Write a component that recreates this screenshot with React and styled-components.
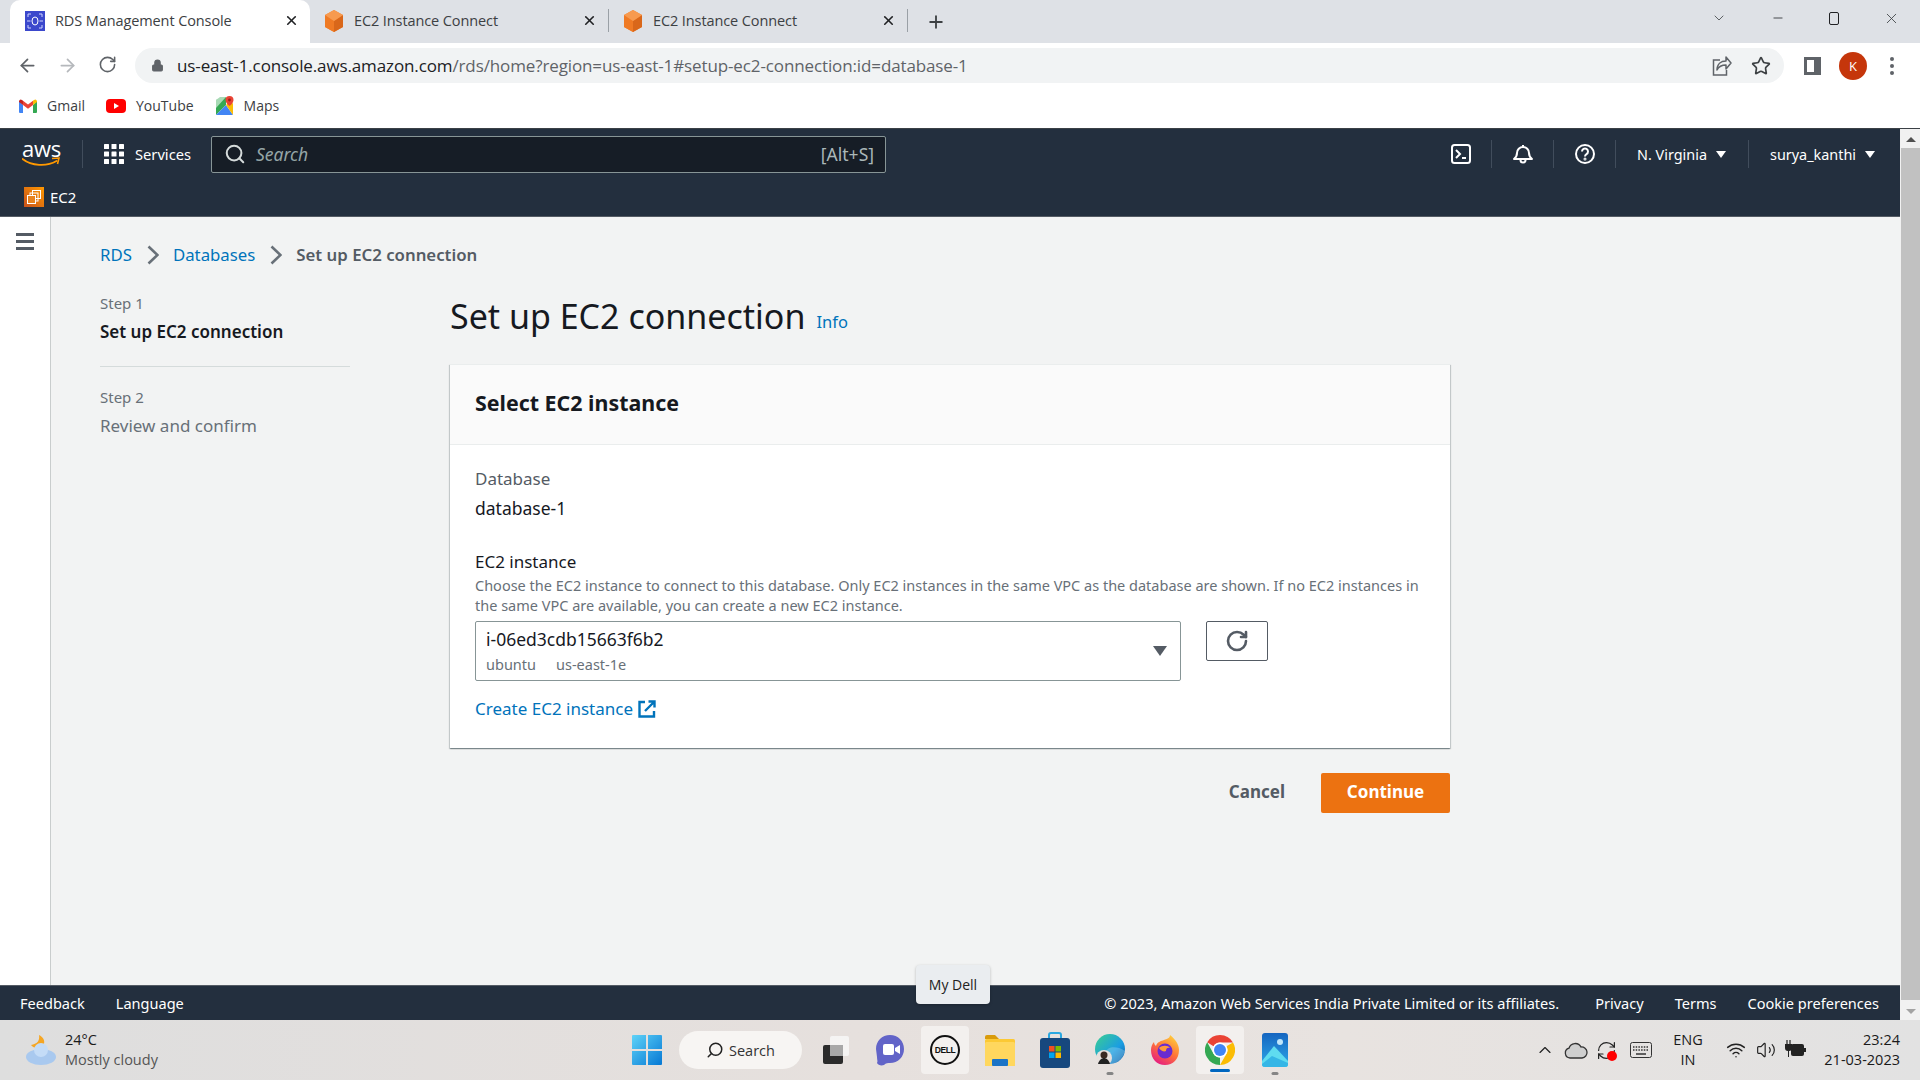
import React from 'react';
import styled, { createGlobalStyle } from 'styled-components';
import {
  ArrowLeft, ArrowRight, RotateCw, Lock, Star, X, Plus, ChevronDown, Minus,
  Search, ChevronUp, RefreshCw, Wifi, Volume2,
} from 'lucide-react';

const Global = createGlobalStyle`
  html, body { margin: 0; padding: 0; background: #fff; overflow: hidden; }
  * { box-sizing: border-box; }
`;

const AWS_FONT = `"Noto Sans", "Open Sans", sans-serif`;
const WIN_FONT = `"Open Sans", "Noto Sans", sans-serif`;

const Shell = styled.div`
  width: 1920px;
  height: 1080px;
  display: flex;
  flex-direction: column;
  overflow: hidden;
  font-family: ${AWS_FONT};
  position: relative;
`;

/* browser chrome */
const TabStrip = styled.div`
  height: 43px;
  background: #dee1e6;
  display: flex;
  align-items: stretch;
  padding-left: 10px;
  font-family: ${WIN_FONT};
  position: relative;
`;
const Tab = styled.div`
  width: ${p => (p.$active ? 300 : 299)}px;
  display: flex;
  align-items: center;
  padding: 0 ${p => (p.$active ? 11 : 12)}px 2px ${p => (p.$active ? 15 : 14)}px;
  background: ${p => (p.$active ? '#fff' : 'transparent')};
  border-radius: 10px 10px 0 0;
  background-clip: padding-box;
  color: #3c4043;
  font-size: 14.5px;
  gap: 10px;
  position: relative;
  ${p => p.$sep && `
    &::after {
      content: '';
      position: absolute;
      right: 0;
      top: 9px;
      bottom: 11px;
      width: 1px;
      background: #9aa0a6;
    }
  `}
`;
const TabTitle = styled.span`
  flex: 1;
  white-space: nowrap;
  letter-spacing: -0.1px;
`;
const TabNew = styled.div`
  width: 55px;
  display: flex;
  align-items: center;
  justify-content: center;
  color: #3c4043;
`;
const WindowButtons = styled.div`
  margin-left: auto;
  display: flex;
  align-items: center;
  color: #3c4043;
  padding-right: 20px;
  gap: 44px;
  height: 36px;
`;
const MaxIcon = styled.span`
  display: block;
  width: 10px;
  height: 13px;
  border: 1.5px solid #202124;
  border-radius: 2px;
`;

const Toolbar = styled.div`
  height: 45px;
  background: #fff;
  display: flex;
  align-items: center;
  color: #5f6368;
`;
const NavButton = styled.div`
  width: 40px;
  display: flex;
  justify-content: center;
  color: ${p => (p.$off ? '#b5b8bc' : '#5f6368')};
`;
const NavGroup = styled.div`
  display: flex;
  padding-left: 7px;
  width: 135px;
`;
const Omnibox = styled.div`
  width: 1649px;
  height: 35px;
  border-radius: 18px;
  background: #f1f3f4;
  display: flex;
  align-items: center;
  padding: 0 13px 0 16px;
  font-family: ${WIN_FONT};
  font-size: 17px;
  color: #5f6368;
  letter-spacing: -0.12px;
`;
const Url = styled.span`
  margin-left: 13px;
  flex: 1;
  white-space: nowrap;
  b { font-weight: 400; color: #202124; }
`;
const OmniIcons = styled.div`
  display: flex;
  gap: 19px;
  align-items: center;
`;
const PanelIcon = styled.span`
  display: block;
  width: 17px;
  height: 18px;
  margin-left: 20px;
  border: 3px solid #5f6368;
  border-right-width: 7px;
`;
const Avatar = styled.span`
  width: 28px;
  height: 28px;
  border-radius: 50%;
  margin-left: 18px;
  background: #c5360b;
  color: #fff;
  display: flex;
  align-items: center;
  justify-content: center;
  font-family: ${WIN_FONT};
  font-size: 13px;
`;
const Dots = styled.span`
  margin-left: 23px;
  width: 4px;
  display: flex;
  flex-direction: column;
  gap: 3px;
  i { display: block; width: 4px; height: 4px; border-radius: 50%; background: #5f6368; }
`;

const Bookmarks = styled.div`
  height: 41px;
  background: #fff;
  display: flex;
  align-items: center;
  padding: 0 0 5px 19px;
  font-family: ${WIN_FONT};
  font-size: 14px;
  color: #3c4043;
  border-bottom: 1px solid #3b4046;
`;
const Bookmark = styled.div`
  display: flex;
  align-items: center;
  gap: 10px;
  margin-right: ${p => p.$gap}px;
`;

/* console */
const ConsoleArea = styled.div`
  flex: 1;
  display: flex;
  min-height: 0;
`;
const Console = styled.div`
  width: 1900px;
  display: flex;
  flex-direction: column;
`;
const Scrollbar = styled.div`
  width: 20px;
  background: #f1f1f1;
  display: flex;
  flex-direction: column;
  align-items: center;
  padding: 8px 0 0 1px;
`;
const ScrollArrow = styled.span`
  width: 0;
  height: 0;
  border-left: 5px solid transparent;
  border-right: 5px solid transparent;
  ${p => (p.$down ? 'border-top: 5px solid #a3a3a3;' : 'border-bottom: 5px solid #505050;')}
`;
const ScrollThumb = styled.div`
  width: 100%;
  flex: 1;
  background: #c1c1c1;
  margin: 6px 0 9px;
`;
const TopBar = styled.div`
  height: 52px;
  background: #232f3e;
  display: flex;
  align-items: center;
  padding-bottom: 2px;
  color: #fff;
  font-size: 15px;
`;
const AwsLogo = styled.div`
  width: 60px;
  margin-left: 22px;
  position: relative;
  height: 36px;
  span {
    position: absolute;
    left: 0;
    top: -3px;
    font-size: 22px;
    font-family: "Open Sans", sans-serif;
    letter-spacing: -0.2px;
    color: #fff;
  }
  svg { position: absolute; left: 0; top: 21px; }
`;
const BarDivider = styled.span`
  width: 1px;
  height: 28px;
  background: #414d5c;
  margin: ${p => p.$m || '0'};
`;
const ServicesBtn = styled.div`
  display: flex;
  align-items: center;
  gap: 11px;
  font-size: 14.7px;
  width: 107px;
  margin-left: 21px;
`;
const SearchBox = styled.div`
  width: 675px;
  height: 37px;
  background: #161d26;
  border: 1px solid #879596;
  border-radius: 2px;
  display: flex;
  align-items: center;
  padding: 0 11px 0 12px;
  gap: 10px;
  color: #d5dbdb;
`;
const SearchHint = styled.span`
  font-style: italic;
  font-size: 17.5px;
  color: #95a5a6;
  flex: 1;
`;
const Shortcut = styled.span`
  font-size: 17.5px;
  color: #aab7b8;
`;
const TopRight = styled.div`
  margin-left: auto;
  display: flex;
  align-items: center;
  height: 100%;
  padding-right: 25px;
`;
const MenuText = styled.span`
  display: flex;
  align-items: center;
  gap: 9px;
  white-space: nowrap;
  font-size: 14.4px;
  i {
    width: 0; height: 0;
    border-left: 5px solid transparent;
    border-right: 5px solid transparent;
    border-top: 7px solid #fff;
  }
`;
const ServiceBar = styled.div`
  height: 36px;
  background: #232f3e;
  border-bottom: 1px solid #545b64;
  display: flex;
  align-items: center;
  padding: 0 0 3px 24px;
  gap: 6px;
  color: #fff;
  font-size: 15px;
`;
const Ec2Badge = styled.span`
  width: 20px;
  height: 20px;
  background: linear-gradient(45deg, #c8511b, #ff9900);
  display: flex;
  align-items: center;
  justify-content: center;
`;
const Body = styled.div`
  flex: 1;
  display: flex;
  min-height: 0;
  background: #f2f3f3;
`;
const SideRail = styled.div`
  width: 51px;
  background: #fff;
  border-right: 1px solid #c9cdcd;
  padding: 16px 0 0 16px;
`;
const Burger = styled.div`
  width: 18px;
  display: flex;
  flex-direction: column;
  gap: 4px;
  i { display: block; height: 3px; background: #545b64; }
`;
const Content = styled.div`
  flex: 1;
  padding: 24px 0 0 49px;
`;
const Crumbs = styled.div`
  display: flex;
  align-items: center;
  height: 26px;
  font-size: 16.8px;
  color: #0073bb;
`;
const CrumbChevron = styled.svg`
  width: 12px;
  height: 20px;
  margin: 2px 14px 0 15px;
`;
const CrumbNow = styled.span`
  color: #545b64;
  font-weight: 600;
`;
const Wizard = styled.div`
  display: flex;
  gap: 100px;
`;
const Steps = styled.div`
  width: 250px;
  padding-top: 25px;
`;
const StepLabel = styled.div`
  font-size: 15px;
  line-height: 22px;
  color: #687078;
`;
const StepName = styled.div`
  font-size: 17px;
  line-height: 26px;
  margin-top: 5px;
  font-weight: ${p => (p.$current ? 600 : 400)};
  color: ${p => (p.$current ? '#16191f' : '#687078')};
`;
const StepRule = styled.div`
  height: 1px;
  background: #d5dbdb;
  margin: 21px 0 19px;
`;
const Main = styled.div`
  width: 1000px;
  padding-top: 27px;
`;
const TitleRow = styled.div`
  display: flex;
  align-items: flex-start;
  gap: 11px;
  height: 44px;
  margin-bottom: 26px;
`;
const Title = styled.h1`
  margin: 0;
  font-size: 34px;
  line-height: 44px;
  font-weight: 400;
  color: #16191f;
`;
const InfoLink = styled.a`
  font-size: 16.5px;
  line-height: 24px;
  margin-top: 16px;
  color: #0073bb;
`;
const Card = styled.section`
  background: #fff;
  border-top: 1px solid #eaeded;
  box-shadow: 0 1px 1px 0 rgba(0, 28, 36, 0.3), 1px 1px 1px 0 rgba(0, 28, 36, 0.15), -1px 1px 1px 0 rgba(0, 28, 36, 0.15);
  height: 384px;
`;
const CardHead = styled.div`
  height: 80px;
  background: #fafafa;
  border-bottom: 1px solid #eaeded;
  padding: 0 25px 5px;
  display: flex;
  align-items: center;
`;
const CardTitle = styled.h2`
  margin: 0;
  font-size: 21.4px;
  font-weight: 700;
  color: #16191f;
`;
const CardBody = styled.div`
  padding: 22px 25px 0;
`;
const FieldKey = styled.div`
  font-size: 17px;
  line-height: 24px;
  color: #545b64;
`;
const FieldValue = styled.div`
  font-size: 17.5px;
  line-height: 24px;
  margin-top: 5px;
  color: #16191f;
`;
const FieldLabel = styled.div`
  font-size: 17px;
  line-height: 24px;
  margin-top: 30px;
  color: #16191f;
`;
const FieldHelp = styled.div`
  font-size: 14.5px;
  line-height: 20px;
  margin-top: 1px;
  color: #687078;
  white-space: nowrap;
`;
const SelectRow = styled.div`
  display: flex;
  align-items: flex-start;
  gap: 25px;
  margin-top: 6px;
`;
const SelectBox = styled.div`
  width: 706px;
  height: 60px;
  border: 1px solid #879596;
  border-radius: 2px;
  padding: 4px 10px 0;
  position: relative;
`;
const SelectMain = styled.div`
  font-size: 17.5px;
  line-height: 26px;
  color: #16191f;
`;
const SelectMeta = styled.div`
  display: flex;
  gap: 20px;
  font-size: 14.5px;
  line-height: 24px;
  color: #687078;
`;
const SelectCaret = styled.span`
  position: absolute;
  right: 13px;
  top: 24px;
  width: 0;
  height: 0;
  border-left: 7px solid transparent;
  border-right: 7px solid transparent;
  border-top: 10px solid #545b64;
`;
const RefreshBtn = styled.button`
  width: 62px;
  height: 40px;
  background: #fff;
  border: 1px solid #545b64;
  border-radius: 2px;
  color: #545b64;
  display: flex;
  align-items: center;
  justify-content: center;
  padding: 0;
`;
const CreateLink = styled.a`
  display: flex;
  align-items: center;
  gap: 5px;
  margin-top: 16px;
  line-height: 24px;
  font-size: 17px;
  color: #0073bb;
`;
const Actions = styled.div`
  display: flex;
  justify-content: flex-end;
  align-items: center;
  margin-top: 25px;
  gap: 36px;
`;
const CancelBtn = styled.button`
  border: 0;
  background: none;
  padding: 0 0 3px;
  font-family: inherit;
  font-size: 17px;
  font-weight: 700;
  color: #545b64;
`;
const ContinueBtn = styled.button`
  width: 129px;
  height: 40px;
  border: 0;
  border-radius: 2px;
  background: #ec7211;
  color: #fff;
  font-family: inherit;
  font-size: 17px;
  font-weight: 700;
  padding: 0 0 3px;
`;
const Footer = styled.footer`
  height: 35px;
  background: #232f3e;
  border-top: 1px solid #545b64;
  display: flex;
  align-items: center;
  gap: 31px;
  padding: 0 21px 0 20px;
  color: #fff;
  font-size: 14.55px;
`;
const Copyright = styled.span`
  margin-left: auto;
  margin-right: 5px;
`;
const Tooltip = styled.div`
  position: absolute;
  left: 916px;
  top: 965px;
  width: 74px;
  height: 39px;
  background: #eaedf0;
  border-radius: 4px;
  box-shadow: 0 1px 3px rgba(0, 0, 0, 0.25);
  display: flex;
  align-items: center;
  justify-content: center;
  font-family: ${WIN_FONT};
  font-size: 14px;
  color: #222;
`;

/* taskbar */
const Taskbar = styled.div`
  height: 60px;
  background: linear-gradient(90deg, #dedede, #e6e0dd 45%, #e8e3e0 70%, #e2e2e2);
  display: flex;
  align-items: center;
  font-family: ${WIN_FONT};
  color: #1a1a1a;
`;
const Weather = styled.div`
  width: 623px;
  padding-left: 26px;
  display: flex;
  align-items: center;
  gap: 9px;
`;
const WeatherText = styled.div`
  font-size: 14.5px;
  line-height: 20px;
  span { display: block; color: #555; }
`;
const Slot = styled.div`
  width: 48px;
  height: 48px;
  border-radius: 4px;
  display: flex;
  align-items: center;
  justify-content: center;
  position: relative;
  background: ${p => (p.$open ? '#f3f0ee' : 'transparent')};
`;
const SlotRow = styled.div`
  display: flex;
  gap: 7px;
  margin-left: 9px;
`;
const RunDot = styled.span`
  position: absolute;
  bottom: ${p => (p.$wide ? '2px' : '-1px')};
  left: 50%;
  transform: translateX(-50%);
  width: ${p => (p.$wide ? 20 : 7)}px;
  height: 3px;
  border-radius: 2px;
  background: ${p => (p.$wide ? '#0067c0' : '#858585')};
`;
const SearchPill = styled.div`
  width: 123px;
  height: 38px;
  margin-left: 8px;
  border-radius: 19px;
  background: #f7f5f3;
  display: flex;
  align-items: center;
  padding-left: 27px;
  gap: 5px;
  font-size: 14.5px;
  color: #333;
`;
const Tray = styled.div`
  margin-left: auto;
  display: flex;
  align-items: center;
  padding-right: 20px;
`;
const TrayIcon = styled.span`
  width: ${p => p.$w || 24}px;
  margin-left: ${p => p.$ml || 6}px;
  display: flex;
  justify-content: center;
  color: #222;
  position: relative;
`;
const RedDot = styled.i`
  position: absolute;
  right: 1px;
  bottom: 0;
  width: 10px;
  height: 10px;
  border-radius: 50%;
  background: #f00;
`;
const Lang = styled.div`
  width: 40px;
  margin-left: 11px;
  text-align: center;
  font-size: 14.5px;
  line-height: 20px;
`;
const Clock = styled.div`
  width: 93px;
  text-align: right;
  font-size: 14.5px;
  line-height: 20px;
`;

/* drawn logos */
const CubeIcon = () => (
  <svg width="20" height="22" viewBox="0 0 20 22">
    <path d="M10 0 19 5v12l-9 5-9-5V5z" fill="#f58536" />
    <path d="M10 11v11l-9-5V5z" fill="#ef7a24" />
    <path d="M10 11 19 5v12l-9 5z" fill="#d9671a" />
    <path d="M10 0 19 5l-9 6-9-6z" fill="#f79a4f" />
  </svg>
);
const RdsIcon = () => (
  <svg width="20" height="20" viewBox="0 0 20 20">
    <rect width="20" height="20" fill="#3b48cc" />
    <ellipse cx="10" cy="10" rx="3" ry="4" fill="none" stroke="#fff" />
    <path d="M3 6V3h3M14 3h3v3M17 14v3h-3M6 17H3v-3M5.5 10H2M14.500 10H18" stroke="#cfd3ff" fill="none" />
  </svg>
);
const GmailIcon = () => (
  <svg width="18" height="14" viewBox="0 0 18 14">
    <path d="M0 2v11a1 1 0 0 0 1 1h3V6z" fill="#4285f4" />
    <path d="M18 2v11a1 1 0 0 1-1 1h-3V6z" fill="#34a853" />
    <path d="M14 6 18 3V2a2 2 0 0 0-3-1l-1 .7z" fill="#fbbc04" />
    <path d="M4 6 9 9.700 14 6V1.700L9 5.400 4 1.700z" fill="#ea4335" />
    <path d="M0 2v1l4 3V1.700L3 1a2 2 0 0 0-3 1z" fill="#c5221f" />
  </svg>
);
const YoutubeIcon = () => (
  <svg width="20" height="14" viewBox="0 0 20 14">
    <rect width="20" height="14" rx="4" fill="#f00" />
    <path d="m8 4 5 3-5 3z" fill="#fff" />
  </svg>
);
const MapsIcon = () => (
  <svg width="19" height="20" viewBox="0 0 19 20">
    <path d="M1 4 11 1v8L1 19z" fill="#34a853" />
    <path d="M1 19 11 9l7 10z" fill="#4285f4" />
    <path d="M1 4 5 1h6L1 12z" fill="#a8dab5" />
    <path d="M11 9 16 4l2 4v11z" fill="#fbbc04" />
    <path d="M14.500 0a4 4 0 0 0-4 4c0 3 4 6 4 6s4-3 4-6a4 4 0 0 0-4-4z" fill="#ea4335" />
    <circle cx="14.500" cy="4" r="1.400" fill="#9d1f17" />
  </svg>
);
const ShareIcon = () => (
  <svg width="20" height="22" viewBox="0 0 20 22" fill="none" stroke="#5f6368" strokeWidth="1.500">
    <path d="M8 5H1.500v15h13v-5" />
    <path d="M5 15c0-6 4-9 9-9V2l5 6-5 6v-4c-4 0-7 1-9 5z" strokeLinejoin="round" />
  </svg>
);
const SwooshIcon = () => (
  <svg width="38" height="12" viewBox="0 0 38 12">
    <path d="M0.500 2c9 7 24 8 34 2" fill="none" stroke="#ff9900" strokeWidth="1.800" strokeLinecap="round" />
    <path d="M30 1.500 37 1l-1.500 6" fill="none" stroke="#ff9900" strokeWidth="1.600" />
  </svg>
);
const GridIcon = () => (
  <svg width="20" height="20" viewBox="0 0 20 20" fill="#fff">
    {[0, 7.5, 15].map(y => [0, 7.5, 15].map(x => <rect key={`${x}-${y}`} x={x} y={y} width="5" height="5" rx="0.5" />))}
  </svg>
);
const Ec2Glyph = () => (
  <svg width="14" height="14" viewBox="0 0 14 14" fill="none" stroke="#fff" strokeWidth="1">
    <rect x="5.500" y="0.500" width="8" height="8" />
    <rect x="3" y="3" width="8" height="8" />
    <rect x="0.500" y="5.500" width="8" height="8" fill="#e8821e" />
  </svg>
);
const TerminalIcon = () => (
  <svg width="20" height="20" viewBox="0 0 20 20" fill="none" stroke="#fff" strokeWidth="2">
    <rect x="1" y="1" width="18" height="18" rx="2.500" />
    <path d="m5 6 4 4-4 4M11 14h4" />
  </svg>
);
const BellIcon = () => (
  <svg width="20" height="20" viewBox="0 0 20 20" fill="none" stroke="#fff" strokeWidth="2">
    <path d="M1 15c2-1.500 3-3 3-6a6 6 0 0 1 12 0c0 3 1 4.500 3 6z" strokeLinejoin="round" />
    <path d="M7.500 16a2.500 2.500 0 0 0 5 0M10 3V1" />
  </svg>
);
const HelpIcon = () => (
  <svg width="20" height="20" viewBox="0 0 20 20" fill="none" stroke="#fff" strokeWidth="2">
    <circle cx="10" cy="10" r="9" />
    <path d="M7 7.500a3 3 0 1 1 4.500 2.600c-1 .6-1.500 1.200-1.500 2.400" />
    <circle cx="10" cy="15" r="0.500" />
  </svg>
);
const ExternalIcon = () => (
  <svg width="18" height="18" viewBox="0 0 18 18" fill="none" stroke="#0073bb" strokeWidth="2.400">
    <path d="M7 2H1.500v14.500H16V11" />
    <path d="M7 11 16 2M10.500 1.500h6v6" />
  </svg>
);
const WeatherIcon = () => (
  <svg width="30" height="30" viewBox="0 0 30 30">
    <path d="M13 0c1 6-2 9-8 10 3 4 10 4 13-1 1-4-1-7-5-9z" fill="#f5a623" />
    <ellipse cx="15" cy="22" rx="15" ry="8" fill="#a9c9ef" />
    <circle cx="15" cy="15" r="7" fill="#c4dcf7" />
  </svg>
);
const WindowsIcon = () => (
  <svg width="30" height="30" viewBox="0 0 30 30">
    <defs>
      <linearGradient id="winG" x1="0" y1="0" x2="1" y2="1">
        <stop offset="0" stopColor="#5fd3f8" />
        <stop offset="1" stopColor="#0678d4" />
      </linearGradient>
    </defs>
    <path d="M0 1a1 1 0 0 1 1-1h13v14H0zM16 0h13a1 1 0 0 1 1 1v13H16zM0 16h14v14H1a1 1 0 0 1-1-1zM16 16h14v13a1 1 0 0 1-1 1H16z" fill="url(#winG)" />
  </svg>
);
const TaskViewIcon = () => (
  <svg width="30" height="30" viewBox="0 0 30 30">
    <rect x="3" y="10" width="20" height="19" rx="2" fill="#2b2b2b" />
    <rect x="10" y="1" width="19" height="20" rx="2" fill="#f7f7f7" fillOpacity="0.85" />
    <rect x="10" y="10" width="13" height="11" fill="#a8a8a8" />
  </svg>
);
const TeamsIcon = () => (
  <svg width="30" height="32" viewBox="0 0 30 32">
    <path d="M15 1c8 0 14 6 14 14s-6 14-14 14c-2 0-4 0-6 2-3 1-6 0-7-2 1-2 0-3 0-6L1 15C1 7 7 1 15 1z" fill="#6264c8" />
    <rect x="8" y="10" width="11" height="11" rx="2" fill="#fff" />
    <path d="m20 14 5-3v9l-5-3z" fill="#fff" />
  </svg>
);
const DellRing = styled.span`
  width: 30px;
  height: 30px;
  border-radius: 50%;
  border: 2.500px solid #111;
  display: flex;
  align-items: center;
  justify-content: center;
  font-family: "Liberation Sans", sans-serif;
  font-weight: 700;
  font-size: 8.500px;
  letter-spacing: -0.4px;
  color: #111;
`;
const FolderIcon = () => (
  <svg width="30" height="32" viewBox="0 0 30 32">
    <path d="M0 3a2 2 0 0 1 2-2h8l4 4H0z" fill="#d99b0b" />
    <rect y="5" width="30" height="27" rx="1.500" fill="#fcc934" />
    <rect y="8" width="30" height="24" rx="1.500" fill="#ffd75e" />
    <rect x="7" y="25" width="16" height="7" rx="1" fill="#1a73c6" />
  </svg>
);
const StoreIcon = () => (
  <svg width="30" height="36" viewBox="0 0 30 36">
    <path d="M9 6V3a2 2 0 0 1 2-2h8a2 2 0 0 1 2 2v3" fill="none" stroke="#2aa7e0" strokeWidth="2" />
    <rect y="6" width="30" height="30" rx="3" fill="#17487e" />
    <rect x="9" y="14" width="5.500" height="5.500" fill="#f25022" />
    <rect x="15.500" y="14" width="5.500" height="5.500" fill="#7fba00" />
    <rect x="9" y="20.500" width="5.500" height="5.500" fill="#00a4ef" />
    <rect x="15.500" y="20.500" width="5.500" height="5.500" fill="#ffb900" />
  </svg>
);
const EdgeIcon = () => (
  <svg width="30" height="32" viewBox="0 0 30 32">
    <defs>
      <linearGradient id="edgeG" x1="0" y1="0" x2="1" y2="1">
        <stop offset="0" stopColor="#3bd08f" />
        <stop offset="0.6" stopColor="#1b9de2" />
        <stop offset="1" stopColor="#0c59a4" />
      </linearGradient>
    </defs>
    <circle cx="15" cy="15" r="15" fill="url(#edgeG)" />
    <path d="M11 18c1-5 10-7 19-1-2 7-8 13-15 13-3 0-1-8-4-12z" fill="#dff5f7" fillOpacity="0.25" />
    <circle cx="9" cy="24" r="8" fill="#e6e0dd" />
    <circle cx="9" cy="21" r="3.500" fill="#3a2a22" />
    <path d="M3 30c1-4 4-6 6-6s5 2 6 6z" fill="#222" />
  </svg>
);
const FirefoxIcon = () => (
  <svg width="30" height="32" viewBox="0 0 30 32">
    <defs>
      <linearGradient id="foxG" x1="0.800" y1="0" x2="0.200" y2="1">
        <stop offset="0" stopColor="#ffd13a" />
        <stop offset="0.5" stopColor="#ff7139" />
        <stop offset="1" stopColor="#e31587" />
      </linearGradient>
    </defs>
    <path d="M20 1c5 4 9 9 9 15 0 9-6 15-14 15S1 25 1 16c0-3 1-6 3-8 0 2 1 3 2 4 1-4 5-5 8-6 3-1 6-2 6-5z" fill="url(#foxG)" />
    <circle cx="15" cy="17" r="7.500" fill="#6a2bd0" />
    <path d="M9 14c3-3 9-3 11 0-3-1-4 1-4 3-2 1-5 0-7-3z" fill="#ff9a3c" />
  </svg>
);
const ChromeIcon = () => (
  <svg width="30" height="30" viewBox="0 0 30 30">
    <path d="M15 0a15 15 0 0 1 13 7.500H15a7.500 7.500 0 0 0-6.500 3.750L2.200 7.200A15 15 0 0 1 15 0z" fill="#ea4335" />
    <path d="M28 7.500A15 15 0 0 1 15 30l6.500-11.250a7.500 7.500 0 0 0 0-7.500z" fill="#fbbc04" />
    <path d="M15 30A15 15 0 0 1 2.200 7.200l6.300 11.550A7.500 7.500 0 0 0 15 22.500z" fill="#34a853" />
    <circle cx="15" cy="15" r="7.500" fill="#fff" />
    <circle cx="15" cy="15" r="6" fill="#4285f4" />
  </svg>
);
const PhotosIcon = () => (
  <svg width="26" height="34" viewBox="0 0 26 34">
    <defs>
      <linearGradient id="phG" x1="0" y1="0" x2="0" y2="1">
        <stop offset="0" stopColor="#1565c0" />
        <stop offset="1" stopColor="#2ea8e8" />
      </linearGradient>
    </defs>
    <rect width="26" height="34" rx="3" fill="url(#phG)" />
    <circle cx="18" cy="9" r="3" fill="#bfe6fb" />
    <path d="M0 28 12 13l14 15v3a3 3 0 0 1-3 3H3a3 3 0 0 1-3-3z" fill="#5fdcf0" />
    <path d="M0 31 10 23l16 7v1a3 3 0 0 1-3 3H3a3 3 0 0 1-3-3z" fill="#35b6e6" />
  </svg>
);
const OneDriveIcon = () => (
  <svg width="24" height="18" viewBox="0 0 24 18" fill="#cfcfcf" stroke="#333" strokeWidth="1.300">
    <path d="M6 17a5 5 0 0 1-1-9.800A6.500 6.500 0 0 1 17 6a5.500 5.500 0 0 1 1 11z" />
  </svg>
);
const KeyboardIcon = () => (
  <svg width="22" height="16" viewBox="0 0 22 16" fill="none" stroke="#333">
    <rect x="0.500" y="0.500" width="21" height="15" rx="2" />
    <path d="M3 5h16M3 8h16" strokeDasharray="1.500 1.200" strokeWidth="1.500" />
    <path d="M6 12h10" strokeWidth="1.500" />
  </svg>
);
const BatteryIcon = () => (
  <svg width="22" height="20" viewBox="0 0 22 20" fill="#222">
    <path d="M3 0v4M6 0v4" stroke="#222" strokeWidth="1.200" />
    <path d="M1 4h7v4a3 3 0 0 1-3 3H4a3 3 0 0 1-3-3zM4 11h1v6H4z" />
    <rect x="7" y="4" width="13" height="12" rx="2" />
    <rect x="20" y="8" width="2" height="4" />
  </svg>
);
const Chevron = () => (
  <CrumbChevron viewBox="0 0 12 20" fill="none" stroke="#687078" strokeWidth="2.600">
    <path d="m1.500 1.500 9 8.500-9 8.500" />
  </CrumbChevron>
);

const taskApps = [
  { key: 'task', icon: <TaskViewIcon /> },
  { key: 'teams', icon: <TeamsIcon /> },
  { key: 'dell', icon: <DellRing>DELL</DellRing>, open: true },
  { key: 'files', icon: <FolderIcon /> },
  { key: 'store', icon: <StoreIcon /> },
  { key: 'edge', icon: <EdgeIcon />, dot: true },
  { key: 'fox', icon: <FirefoxIcon /> },
  { key: 'chrome', icon: <ChromeIcon />, open: true, wide: true },
  { key: 'photos', icon: <PhotosIcon />, dot: true },
];

export default function App() {
  return (
    <Shell>
      <Global />
      <TabStrip>
        <Tab $active>
          <RdsIcon />
          <TabTitle>RDS Management Console</TabTitle>
          <X size={15} strokeWidth={2.6} color="#202124" />
        </Tab>
        <Tab $sep>
          <CubeIcon />
          <TabTitle>EC2 Instance Connect</TabTitle>
          <X size={15} strokeWidth={2.6} color="#202124" />
        </Tab>
        <Tab $sep>
          <CubeIcon />
          <TabTitle>EC2 Instance Connect</TabTitle>
          <X size={15} strokeWidth={2.6} color="#202124" />
        </Tab>
        <TabNew><Plus size={20} strokeWidth={2.2} /></TabNew>
        <WindowButtons>
          <ChevronDown size={16} strokeWidth={1.2} />
          <Minus size={14} strokeWidth={1.6} />
          <MaxIcon />
          <X size={17} strokeWidth={1.2} />
        </WindowButtons>
      </TabStrip>

      <Toolbar>
        <NavGroup>
          <NavButton><ArrowLeft size={21} /></NavButton>
          <NavButton $off><ArrowRight size={21} /></NavButton>
          <NavButton><RotateCw size={19} /></NavButton>
        </NavGroup>
        <Omnibox>
          <Lock size={13} fill="#5f6368" />
          <Url><b>us-east-1.console.aws.amazon.com</b>/rds/home?region=us-east-1#setup-ec2-connection:id=database-1</Url>
          <OmniIcons>
            <ShareIcon />
            <Star size={20} color="#3c4043" />
          </OmniIcons>
        </Omnibox>
        <PanelIcon />
        <Avatar>K</Avatar>
        <Dots><i /><i /><i /></Dots>
      </Toolbar>

      <Bookmarks>
        <Bookmark $gap={21}><GmailIcon />Gmail</Bookmark>
        <Bookmark $gap={21}><YoutubeIcon />YouTube</Bookmark>
        <Bookmark $gap={0}><MapsIcon />Maps</Bookmark>
      </Bookmarks>

      <ConsoleArea>
        <Console>
          <TopBar>
            <AwsLogo>
              <span>aws</span>
              <SwooshIcon />
            </AwsLogo>
            <BarDivider />
            <ServicesBtn><GridIcon />Services</ServicesBtn>
            <SearchBox>
              <Search size={22} strokeWidth={2.2} />
              <SearchHint>Search</SearchHint>
              <Shortcut>[Alt+S]</Shortcut>
            </SearchBox>
            <TopRight>
              <TerminalIcon />
              <BarDivider $m="0 21px 0 20px" />
              <BellIcon />
              <BarDivider $m="0 21px 0 20px" />
              <HelpIcon />
              <BarDivider $m="0 21px 0 20px" />
              <MenuText>N. Virginia<i /></MenuText>
              <BarDivider $m="0 21px 0 22px" />
              <MenuText>surya_kanthi<i /></MenuText>
            </TopRight>
          </TopBar>
          <ServiceBar>
            <Ec2Badge><Ec2Glyph /></Ec2Badge>
            EC2
          </ServiceBar>

          <Body>
            <SideRail>
              <Burger><i /><i /><i /></Burger>
            </SideRail>
            <Content>
              <Crumbs>
                RDS
                <Chevron />
                Databases
                <Chevron />
                <CrumbNow>Set up EC2 connection</CrumbNow>
              </Crumbs>
              <Wizard>
                <Steps>
                  <StepLabel>Step 1</StepLabel>
                  <StepName $current>Set up EC2 connection</StepName>
                  <StepRule />
                  <StepLabel>Step 2</StepLabel>
                  <StepName>Review and confirm</StepName>
                </Steps>
                <Main>
                  <TitleRow>
                    <Title>Set up EC2 connection</Title>
                    <InfoLink>Info</InfoLink>
                  </TitleRow>
                  <Card>
                    <CardHead>
                      <CardTitle>Select EC2 instance</CardTitle>
                    </CardHead>
                    <CardBody>
                      <FieldKey>Database</FieldKey>
                      <FieldValue>database-1</FieldValue>
                      <FieldLabel>EC2 instance</FieldLabel>
                      <FieldHelp>
                        Choose the EC2 instance to connect to this database. Only EC2 instances in the same VPC as the database are shown. If no EC2 instances in<br />
                        the same VPC are available, you can create a new EC2 instance.
                      </FieldHelp>
                      <SelectRow>
                        <SelectBox>
                          <SelectMain>i-06ed3cdb15663f6b2</SelectMain>
                          <SelectMeta><span>ubuntu</span><span>us-east-1e</span></SelectMeta>
                          <SelectCaret />
                        </SelectBox>
                        <RefreshBtn><RotateCw size={24} strokeWidth={2.6} /></RefreshBtn>
                      </SelectRow>
                      <CreateLink>Create EC2 instance <ExternalIcon /></CreateLink>
                    </CardBody>
                  </Card>
                  <Actions>
                    <CancelBtn>Cancel</CancelBtn>
                    <ContinueBtn>Continue</ContinueBtn>
                  </Actions>
                </Main>
              </Wizard>
            </Content>
          </Body>

          <Footer>
            <span>Feedback</span>
            <span>Language</span>
            <Copyright>© 2023, Amazon Web Services India Private Limited or its affiliates.</Copyright>
            <span>Privacy</span>
            <span>Terms</span>
            <span>Cookie preferences</span>
          </Footer>
        </Console>
        <Scrollbar>
          <ScrollArrow />
          <ScrollThumb />
          <ScrollArrow $down />
          <span style={{ height: 6 }} />
        </Scrollbar>
      </ConsoleArea>

      <Taskbar>
        <Weather>
          <WeatherIcon />
          <WeatherText>24°C<span>Mostly cloudy</span></WeatherText>
        </Weather>
        <Slot><WindowsIcon /></Slot>
        <SearchPill><Search size={18} color="#222" style={{ transform: 'scaleX(-1)' }} />Search</SearchPill>
        <SlotRow>
          {taskApps.map(app => (
            <Slot key={app.key} $open={app.open}>
              {app.icon}
              {app.dot && <RunDot />}
              {app.wide && <RunDot $wide />}
            </Slot>
          ))}
        </SlotRow>
        <Tray>
          <TrayIcon><ChevronUp size={20} strokeWidth={1.4} /></TrayIcon>
          <TrayIcon $ml={7}><OneDriveIcon /></TrayIcon>
          <TrayIcon><RefreshCw size={21} strokeWidth={1.4} /><RedDot /></TrayIcon>
          <TrayIcon $w={32} $ml={7}><KeyboardIcon /></TrayIcon>
          <Lang>ENG<br />IN</Lang>
          <TrayIcon $ml={16}><Wifi size={20} strokeWidth={1.8} /></TrayIcon>
          <TrayIcon><Volume2 size={20} strokeWidth={1.4} /></TrayIcon>
          <TrayIcon $ml={5}><BatteryIcon /></TrayIcon>
          <Clock>23:24<br />21-03-2023</Clock>
        </Tray>
      </Taskbar>
      <Tooltip>My Dell</Tooltip>
    </Shell>
  );
}
